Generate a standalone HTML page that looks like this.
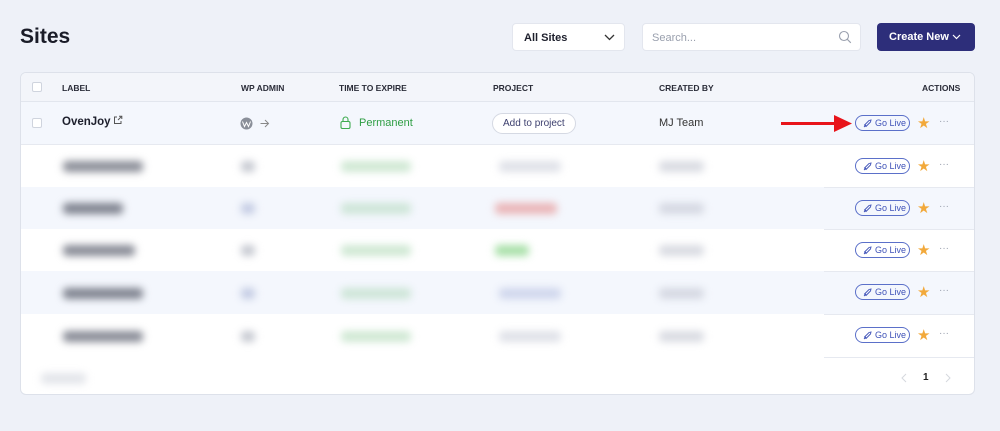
<!DOCTYPE html>
<html><head><meta charset="utf-8"><style>
*{box-sizing:border-box;margin:0;padding:0}
body{width:1000px;height:431px;background:#eef1f8;font-family:"Liberation Sans",sans-serif;position:relative;overflow:hidden;color:#1d1f2c}
.abs{position:absolute}
h1{position:absolute;left:20px;top:25px;font-size:21px;font-weight:bold;color:#1a1c28}
.sel{left:512px;top:23px;width:113px;height:28px;background:#fff;border-radius:4px;border:1px solid #e3e6ee;font-size:11px;font-weight:bold;padding:8px 11px}
.search{left:642px;top:23px;width:219px;height:28px;background:#fff;border-radius:4px;border:1px solid #e3e6ee;font-size:11px;color:#9aa0ae;padding:8px 9px}
.btn{left:877px;top:23px;width:98px;height:28px;background:#2d2e7a;border-radius:4px;color:#fff;font-size:11px;font-weight:bold;padding:8px 12px}
.table{left:20px;top:72px;width:955px;height:323px;background:#fff;border:1px solid #dde1ea;border-radius:6px;overflow:hidden}
.hdr{left:0;top:0;width:955px;height:29px;background:#f3f5fa;border-bottom:1px solid #e2e6ee;font-size:8.5px;font-weight:bold;color:#2a2c38}
.hdr span{position:absolute;top:10px}
.cb{position:absolute;width:10px;height:10px;border:1px solid #cfd4de;border-radius:2px;background:#fff}
.row{position:absolute;left:0;width:955px}
.sep{position:absolute;left:803px;width:152px;height:1px;background:#e6e9f0}
.blu{background:#f4f7fd}
.gl{position:absolute;left:834px;width:55px;height:16px;border:1px solid #5b70c9;border-radius:9px;font-size:9px;color:#3f52b8;padding:2px 0 0 19px}
.gl svg{position:absolute;left:7px;top:3px}
.star{position:absolute;left:896px;color:#f2a93b;font-size:15px;line-height:15px}
.dots{position:absolute;left:918px;color:#9aa0ae;font-size:10px;line-height:10px}
.bl{filter:blur(4px)}
.bar{position:absolute;height:11px;border-radius:4px}
</style></head><body>
<h1>Sites</h1>
<div class="abs sel">All Sites<svg class="abs" style="left:91px;top:10px" width="11" height="7" viewBox="0 0 11 7"><path d="M1 1l4.5 4.5L10 1" stroke="#333" stroke-width="1.3" fill="none"/></svg></div>
<div class="abs search">Search...<svg class="abs" style="left:195px;top:6px" width="14" height="14" viewBox="0 0 14 14"><circle cx="6" cy="6" r="4.5" stroke="#9aa0ae" stroke-width="1.1" fill="none"/><path d="M9.3 9.3l3.5 3.5" stroke="#9aa0ae" stroke-width="1.1"/></svg></div>
<div class="abs btn">Create New<svg class="abs" style="left:75px;top:11px" width="9" height="6" viewBox="0 0 9 6"><path d="M1 1l3.5 3.5L8 1" stroke="#fff" stroke-width="1.2" fill="none"/></svg></div>

<div class="abs table">
 <div class="abs hdr">
  <div class="cb" style="left:11px;top:9px"></div>
  <span style="left:41px">LABEL</span><span style="left:220px">WP ADMIN</span><span style="left:318px">TIME TO EXPIRE</span><span style="left:472px">PROJECT</span><span style="left:638px">CREATED BY</span><span style="left:901px">ACTIONS</span>
 </div>
 <div class="row blu" style="top:29px;height:43px;border-bottom:1px solid #e6e9f0">
  <div class="cb" style="left:11px;top:16px"></div>
  <span class="abs" style="left:41px;top:14px;font-size:11.5px;font-weight:bold">OvenJoy</span>
  <svg class="abs" style="left:92px;top:13px" width="10" height="10" viewBox="0 0 10 10"><path d="M4 2H1.5v6.5H8V6M6 1.2h2.8V4M8.8 1.2L5 5" stroke="#555" stroke-width="1" fill="none"/></svg>
  <svg class="abs" style="left:219px;top:15px" width="13" height="13" viewBox="0 0 13 13"><circle cx="6.5" cy="6.5" r="6" fill="#8a8f99"/><path d="M2.5 4.5l2 5 2-4 2 4 2-5" stroke="#fff" stroke-width="1" fill="none"/></svg>
  <svg class="abs" style="left:239px;top:17px" width="10" height="9" viewBox="0 0 10 9"><path d="M0.5 4.5h8M5 1l3.5 3.5L5 8" stroke="#888" stroke-width="1" fill="none"/></svg>
  <svg class="abs" style="left:319px;top:14px" width="11" height="13" viewBox="0 0 11 13"><rect x="1" y="5.5" width="9" height="7" rx="1.5" stroke="#3dab4f" stroke-width="1.1" fill="none"/><path d="M3 5.5V3.5a2.5 2.5 0 015 0v2" stroke="#3dab4f" stroke-width="1.1" fill="none"/></svg>
  <span class="abs" style="left:338px;top:15px;font-size:11px;color:#2f9e44">Permanent</span>
  <span class="abs" style="left:471px;top:11px;width:84px;height:21px;border:1px solid #d5d9e3;border-radius:11px;background:#fff;font-size:10px;color:#3c3f6e;padding:5px 0 0 10px;line-height:10px">Add to project</span>
  <span class="abs" style="left:638px;top:15px;font-size:11px;color:#333">MJ Team</span>
  <div class="abs" style="left:760px;top:20px;width:62px;height:3px;background:#e8141a"></div>
  <svg class="abs" style="left:813px;top:13px" width="18" height="17" viewBox="0 0 18 17"><path d="M0 0L18 8.5 0 17z" fill="#e8141a"/></svg>
  <div class="gl" style="top:13px"><svg width="9" height="9" viewBox="0 0 9 9"><path d="M1 8l2-2M3 7.5L7.5 3 8 1 6 1.5 1.5 6z" stroke="#3f52b8" stroke-width="0.9" fill="none"/></svg>Go Live</div>
  <span class="star" style="top:14px">★</span><span class="dots" style="top:15px">···</span>
 </div>
 <div class="row blu" style="top:114px;height:42px"></div>
 <div class="row blu" style="top:198px;height:43px"></div>
 <div class="sep" style="top:114px"></div><div class="sep" style="top:156px"></div><div class="sep" style="top:198px"></div><div class="sep" style="top:241px"></div><div class="sep" style="top:284px"></div>
 <div class="abs bl" style="left:0;top:72px;width:803px;height:251px">
  <div class="bar" style="left:42px;top:16px;width:80px;background:#8b8e98"></div><div class="bar" style="left:220px;top:16px;width:14px;background:#c5c8d0"></div><div class="bar" style="left:320px;top:16px;width:70px;background:#cfe8d3"></div><div class="bar" style="left:478px;top:16px;width:62px;background:#dfe1e8"></div><div class="bar" style="left:638px;top:16px;width:45px;background:#d9dbe2"></div>
  <div class="bar" style="left:42px;top:58px;width:60px;background:#7e828e"></div><div class="bar" style="left:220px;top:58px;width:14px;background:#c3cbe3"></div><div class="bar" style="left:320px;top:58px;width:70px;background:#cde5d7"></div><div class="bar" style="left:474px;top:58px;width:62px;background:#eab4b6"></div><div class="bar" style="left:638px;top:58px;width:45px;background:#d5d8e2"></div>
  <div class="bar" style="left:42px;top:100px;width:72px;background:#888b96"></div><div class="bar" style="left:220px;top:100px;width:14px;background:#c5c8d0"></div><div class="bar" style="left:320px;top:100px;width:70px;background:#cfe8d3"></div><div class="bar" style="left:474px;top:100px;width:34px;background:#a8e0a8"></div><div class="bar" style="left:638px;top:100px;width:45px;background:#d9dbe2"></div>
  <div class="bar" style="left:42px;top:143px;width:80px;background:#7e828e"></div><div class="bar" style="left:220px;top:143px;width:14px;background:#c3cbe3"></div><div class="bar" style="left:320px;top:143px;width:70px;background:#cde5d7"></div><div class="bar" style="left:478px;top:143px;width:62px;background:#cfd6ec"></div><div class="bar" style="left:638px;top:143px;width:45px;background:#d5d8e2"></div>
  <div class="bar" style="left:42px;top:186px;width:80px;background:#888b96"></div><div class="bar" style="left:220px;top:186px;width:14px;background:#c5c8d0"></div><div class="bar" style="left:320px;top:186px;width:70px;background:#cfe8d3"></div><div class="bar" style="left:478px;top:186px;width:62px;background:#dfe1e8"></div><div class="bar" style="left:638px;top:186px;width:45px;background:#d9dbe2"></div>
  <div class="bar" style="left:20px;top:228px;width:45px;background:#e3e5ea"></div>
 </div>
 <div class="gl" style="top:85px"><svg width="9" height="9" viewBox="0 0 9 9"><path d="M1 8l2-2M3 7.5L7.5 3 8 1 6 1.5 1.5 6z" stroke="#3f52b8" stroke-width="0.9" fill="none"/></svg>Go Live</div><span class="star" style="top:86px">★</span><span class="dots" style="top:87px">···</span>
 <div class="gl" style="top:127px"><svg width="9" height="9" viewBox="0 0 9 9"><path d="M1 8l2-2M3 7.5L7.5 3 8 1 6 1.5 1.5 6z" stroke="#3f52b8" stroke-width="0.9" fill="none"/></svg>Go Live</div><span class="star" style="top:128px">★</span><span class="dots" style="top:129px">···</span>
 <div class="gl" style="top:169px"><svg width="9" height="9" viewBox="0 0 9 9"><path d="M1 8l2-2M3 7.5L7.5 3 8 1 6 1.5 1.5 6z" stroke="#3f52b8" stroke-width="0.9" fill="none"/></svg>Go Live</div><span class="star" style="top:170px">★</span><span class="dots" style="top:171px">···</span>
 <div class="gl" style="top:211px"><svg width="9" height="9" viewBox="0 0 9 9"><path d="M1 8l2-2M3 7.5L7.5 3 8 1 6 1.5 1.5 6z" stroke="#3f52b8" stroke-width="0.9" fill="none"/></svg>Go Live</div><span class="star" style="top:212px">★</span><span class="dots" style="top:213px">···</span>
 <div class="gl" style="top:254px"><svg width="9" height="9" viewBox="0 0 9 9"><path d="M1 8l2-2M3 7.5L7.5 3 8 1 6 1.5 1.5 6z" stroke="#3f52b8" stroke-width="0.9" fill="none"/></svg>Go Live</div><span class="star" style="top:255px">★</span><span class="dots" style="top:256px">···</span>
 <svg class="abs" style="left:880px;top:300px" width="6" height="10" viewBox="0 0 6 10"><path d="M5 1L1 5l4 4" stroke="#d5d8de" fill="none"/></svg>
 <span class="abs" style="left:902px;top:299px;font-size:10px;font-weight:bold;color:#222">1</span>
 <svg class="abs" style="left:924px;top:300px" width="6" height="10" viewBox="0 0 6 10"><path d="M1 1l4 4-4 4" stroke="#d5d8de" fill="none"/></svg>
</div>
</body></html>
